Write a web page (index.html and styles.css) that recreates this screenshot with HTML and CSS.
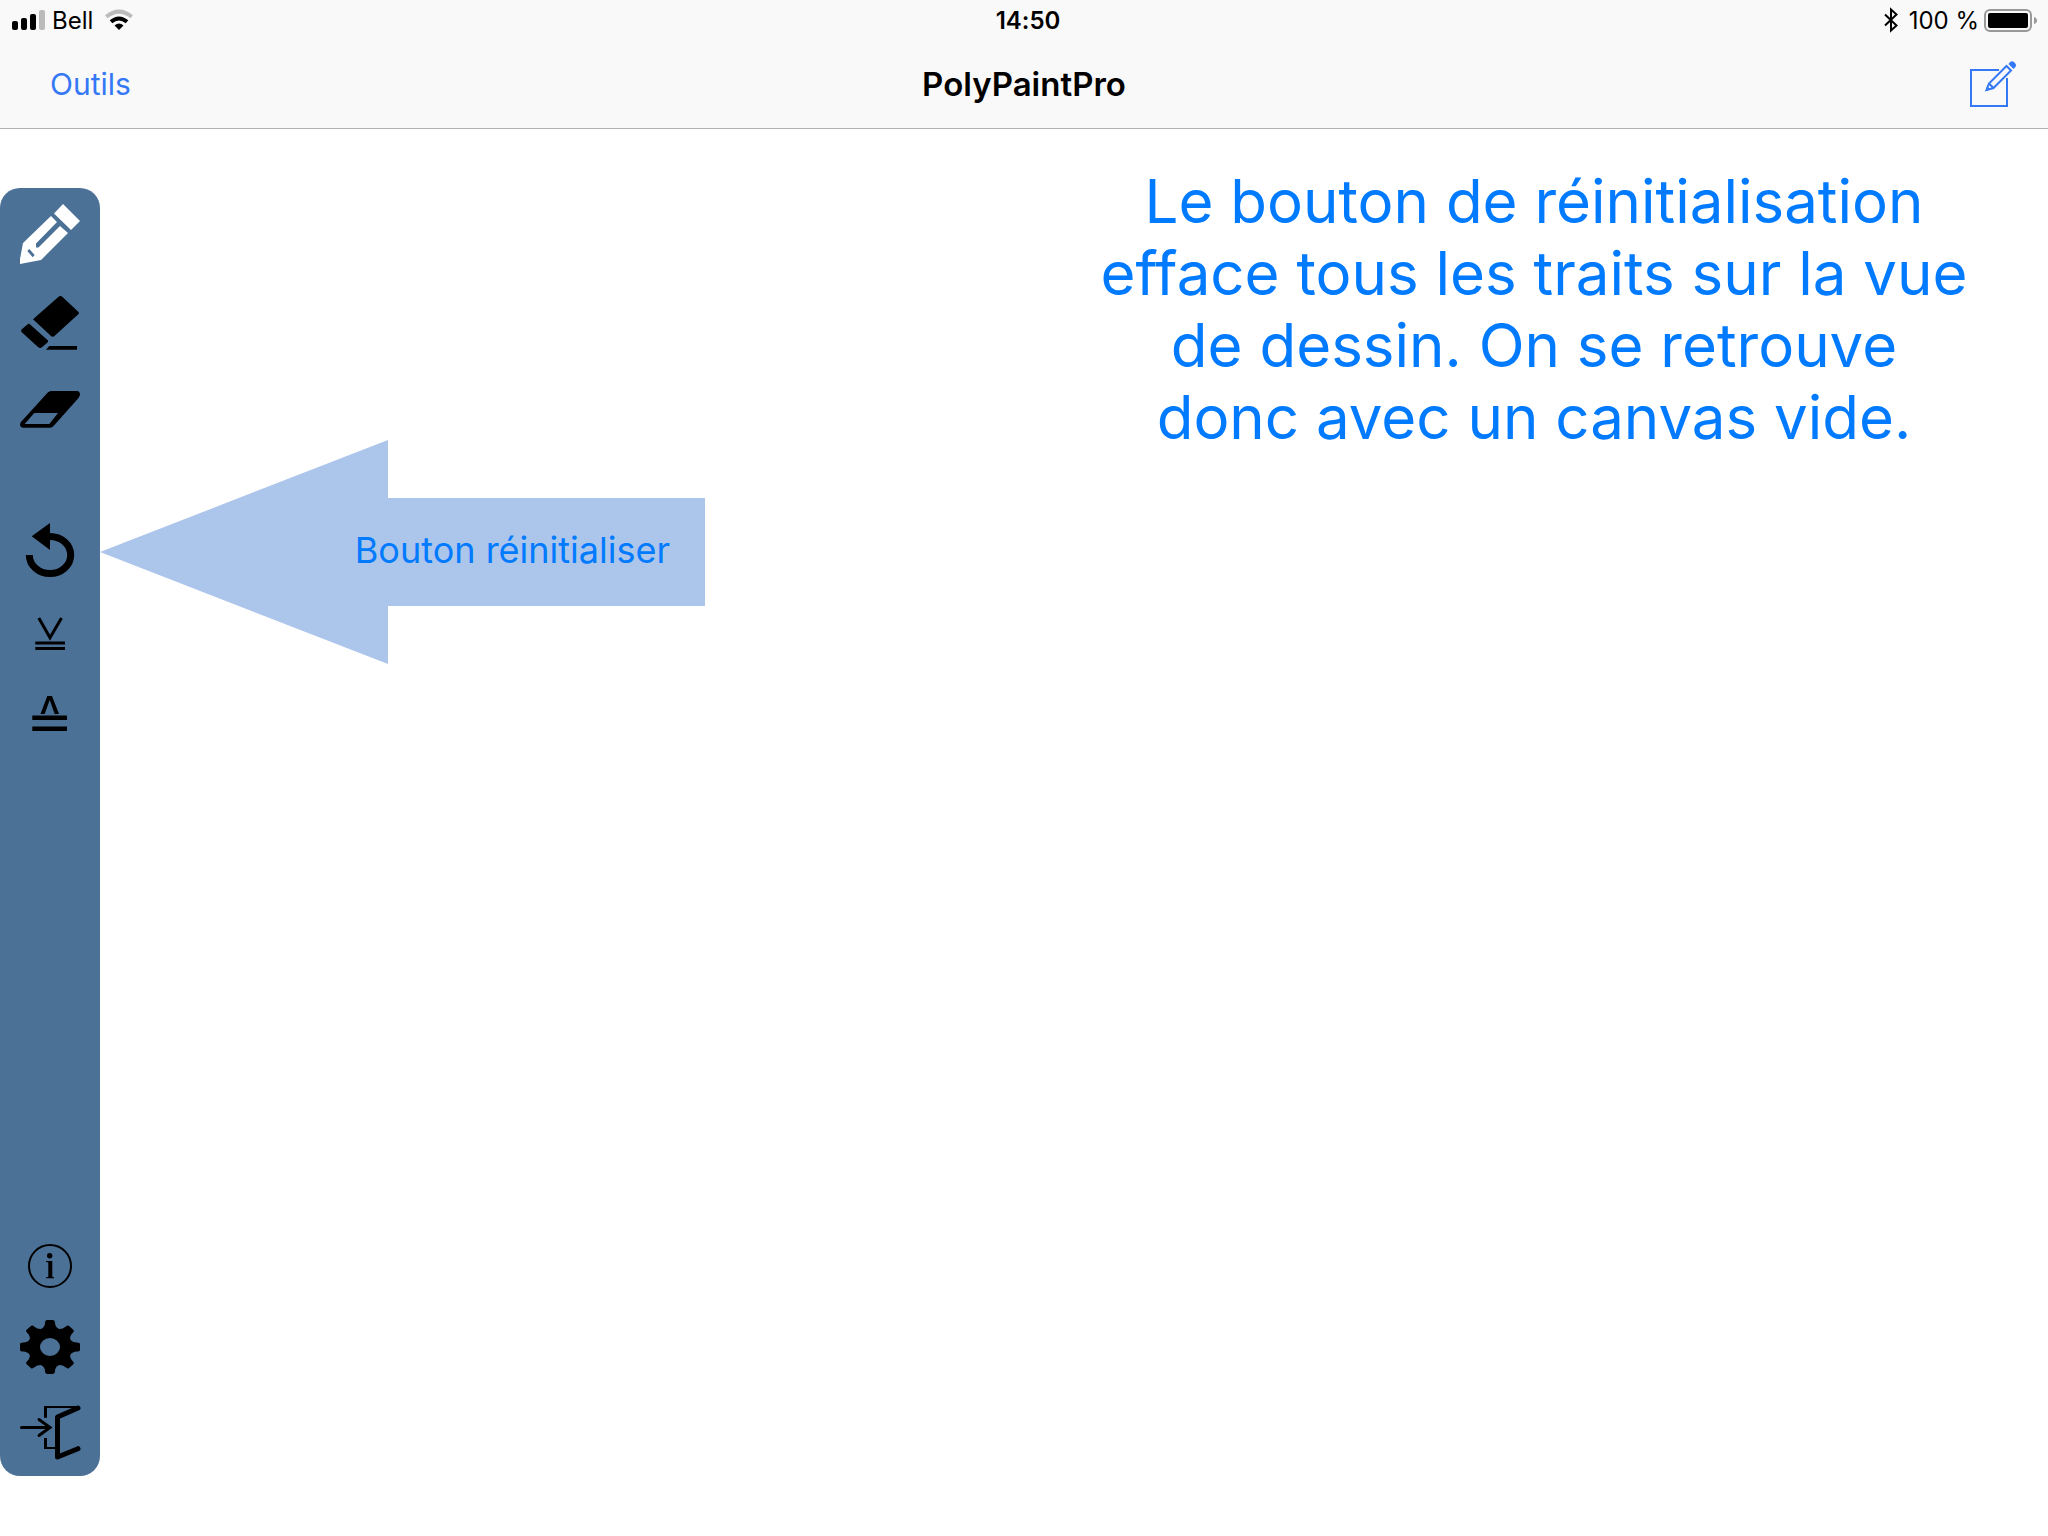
FILE: index.html
```html
<!DOCTYPE html>
<html lang="fr">
<head>
<meta charset="utf-8">
<meta name="viewport" content="width=device-width, initial-scale=1">
<title>PolyPaintPro</title>
<link rel="stylesheet" href="styles.css">
</head>
<body>
<header class="header">
  <div class="status">
    <div class="status-left">
      <svg class="signal" viewBox="0 0 34 20" aria-hidden="true">
        <rect x="0" y="11" width="6" height="9" rx="2"/><rect x="9" y="8" width="6" height="12" rx="2"/><rect x="18" y="4" width="6" height="16" rx="2"/><rect class="dim" x="27" y="0" width="6" height="20" rx="2"/>
      </svg>
      <span class="status-text">Bell</span>
      <svg class="wifi" viewBox="0 0 28 20" aria-hidden="true">
        <path class="dim-line" d="M1.300 6.800Q14 -3.500 26.700 6.800"/>
        <path class="line" d="M6 11.800Q14 5.200 22 11.800"/>
        <path d="M9.500 15.400Q14 11.600 18.500 15.400L14 20Z"/>
      </svg>
    </div>
    <time class="clock status-text">14:50</time>
    <div class="status-right">
      <svg class="bluetooth" viewBox="0 0 14 24" aria-hidden="true"><path d="M1 6.500L12.500 17.500L7 22.500V1.500L12.500 6.500L1 17.500"/></svg>
      <span class="status-text">100 %</span>
      <svg class="battery" viewBox="0 0 53 23" aria-hidden="true"><rect class="shell" x="1" y="1" width="46" height="21" rx="5"/><rect x="4" y="4" width="40" height="15" rx="2"/><path class="nub" d="M50 8Q53 9 53 11.500T50 15Z"/></svg>
    </div>
  </div>
  <nav class="nav">
    <button class="nav-link" type="button">Outils</button>
    <h1 class="title">PolyPaintPro</h1>
    <button class="compose" type="button" aria-label="Nouveau dessin">
      <svg viewBox="0 0 46 46" aria-hidden="true">
        <path d="M29 9H1V45H37V17"/>
        <path d="M16.500 29L19 22.500L36.500 5L41 9.500L23.500 27ZM19 22.500L23.500 27"/>
        <path class="fill" d="M15.500 30L17 25L20.500 28.500ZM38.500 3Q41 -1.500 44.500 1.500T43.500 8Z"/>
      </svg>
    </button>
  </nav>
</header>
<main class="workspace">
  <div class="toolbar" role="toolbar" aria-label="Outils de dessin">
    <div class="group draw">
      <button class="tool active" type="button" aria-label="Crayon"><svg viewBox="0 0 60 60"><path fill-rule="evenodd" d="M43 0L60 17L51 26L34 9.500ZM31 12L37 18L16 39.500V43.500H18.500L40 22L48 29L21 56L0 60V55L3 39ZM7.300 47L9.300 45L14.700 51L12.700 53.300Z"/></svg></button>
      <button class="tool" type="button" aria-label="Efface trait"><svg viewBox="0 0 60 60"><path d="M38 5.300Q40.300 2.700 42.500 5L58.500 20Q59.500 21 58.500 22L35 43.500Q32.700 46 30.500 43.500L13 27.300ZM6.800 33L9 31.500L28 48.500V50L22 55.300Q20 57 18 55L1.500 40Q.5 38.500 1.500 37.500ZM26 57.700L29.300 54H57V57.700Z"/></svg></button>
      <button class="tool" type="button" aria-label="Efface segment"><svg viewBox="0 0 60 60"><path fill-rule="evenodd" d="M30.500 11H57Q60 11 60 15L58.500 18L34 45.500Q32 47.700 30 47.700H3Q-1 47.500 .5 42.500L28 12.300ZM14.300 33L4.700 44H29.300L38 33Z"/></svg></button>
    </div>
    <div class="group actions">
      <button class="tool" type="button" aria-label="Réinitialiser"><svg viewBox="0 0 60 60"><path d="M11.700 16.300L30 3V30Z"/><path class="stroke ring" d="M9.300 35A20.700 18.600 0 1 0 30 16.400"/></svg></button>
      <button class="tool" type="button" aria-label="Empiler"><svg viewBox="0 0 60 60"><path class="stroke thin" d="M18.800 16L30 35.800L41.500 16M15.300 41H45M15.300 46.400H45"/></svg></button>
      <button class="tool" type="button" aria-label="Dépiler"><svg viewBox="0 0 60 60"><path d="M20.500 30L27.300 12H32L39 30H34.700L29.700 16L24.700 30ZM12.300 31.500H47V36H12.300ZM12.300 42.500H47V47H12.300Z"/></svg></button>
    </div>
    <div class="group system">
      <button class="tool" type="button" aria-label="Informations"><svg viewBox="0 0 60 60"><circle class="stroke fine" cx="30" cy="30" r="21"/><circle cx="29.700" cy="19.700" r="2.700"/><path d="M26 25H32.300V40.700L34 41.300V42.300H26V41.300L28.300 40.700V26.500L26 26Z"/></svg></button>
      <button class="tool" type="button" aria-label="Réglages"><svg viewBox="0 0 60 60"><g transform="scale(1 .9)"><circle class="stroke gear" cx="30" cy="30" r="16"/><path d="M20 11Q25 8 25 3Q25 0 27 0H33Q35 0 35 3Q35 8 40 11Z" id="tooth"/><use href="#tooth" transform="rotate(45 30 30)"/><use href="#tooth" transform="rotate(90 30 30)"/><use href="#tooth" transform="rotate(135 30 30)"/><use href="#tooth" transform="rotate(180 30 30)"/><use href="#tooth" transform="rotate(225 30 30)"/><use href="#tooth" transform="rotate(270 30 30)"/><use href="#tooth" transform="rotate(315 30 30)"/></g></svg></button>
      <button class="tool" type="button" aria-label="Quitter"><svg viewBox="0 0 60 60"><path class="stroke arrow" d="M1.500 23.500H29M19 15.500L30 23.500L19 31.500"/><path class="stroke frame" d="M24 3H58M24 44H36"/><path class="stroke thin" d="M25.500 13.700V2M25.500 34V45"/><path class="stroke door" d="M58 4L37.500 13V53L58 44.700"/></svg></button>
    </div>
  </div>
  <p class="callout">Bouton réinitialiser</p>
  <p class="description">Le bouton de réinitialisation efface tous les traits sur la vue de dessin. On se retrouve donc avec un canvas vide.</p>
</main>
</body>
</html>
```

FILE: styles.css
```css
* { box-sizing: border-box; }

body {
  margin: 0;
  min-height: 100vh;
  display: flex;
  flex-direction: column;
  background: #fff;
  color: #000;
  font-family: Inter, "Liberation Sans", sans-serif;
  font-variant-ligatures: none;
  font-feature-settings: "calt" 0;
}

button {
  padding: 0;
  border: 0;
  background: none;
  font: inherit;
  cursor: pointer;
}

svg { display: block; overflow: visible; }

.header {
  background: #f9f9f9;
  border-bottom: 1px solid #b2b2b2;
}

.status, .nav {
  display: grid;
  grid-template-columns: 1fr auto 1fr;
  align-items: center;
}

.status {
  height: 40px;
  padding: 0 11px 0 12px;
  font-size: 24px;
  line-height: 38px;
}

.status-text { padding-top: 2px; }
.status-left, .status-right { display: flex; align-items: center; }
.status-left { gap: 6px; }
.status-right { justify-content: flex-end; gap: 5px; }
.clock { font-weight: 600; padding-left: 7px; }

.signal { width: 34px; height: 20px; }
.wifi { width: 28px; height: 20px; margin-left: 6px; }
.bluetooth { width: 14px; height: 24px; margin-right: 6px; fill: none; stroke: #000; stroke-width: 2; }
.battery { width: 53px; height: 23px; }
.dim { fill: #bbb; }
.dim-line, .line { fill: none; stroke-width: 4; }
.dim-line { stroke: #bbb; }
.line { stroke: #000; }
.shell { fill: none; stroke: #999; stroke-width: 2; }
.nub { fill: #999; }

.nav {
  height: 88px;
  padding: 0 32px 0 50px;
}

.nav-link {
  justify-self: start;
  color: #3478f6;
  font-size: 30px;
  line-height: 40px;
}

.title {
  margin: 0;
  padding-right: 18px;
  font-size: 33px;
  line-height: 40px;
  font-weight: 600;
}

.compose { justify-self: end; }
.compose svg { width: 46px; height: 46px; fill: none; stroke: #3478f6; stroke-width: 2; }
.compose .fill { fill: #3478f6; stroke: none; }

.workspace {
  flex: 1;
  display: flex;
  align-items: flex-start;
}

.toolbar {
  align-self: stretch;
  flex: none;
  display: flex;
  flex-direction: column;
  width: 100px;
  margin: 59px 0 60px;
  padding: 16px 0 12px;
  border-radius: 20px;
  background: #4c7197;
}

.group { display: flex; flex-direction: column; align-items: center; }
.draw { gap: 28px; }
.actions { gap: 22px; margin-top: 80px; }
.system { gap: 24px; margin-top: auto; }

.tool, .tool svg { width: 60px; height: 60px; }
.tool { color: #000; }
.tool.active { color: #fff; }
.tool svg { fill: currentColor; }
.tool .stroke { fill: none; stroke: currentColor; }
.tool .ring { stroke-width: 7; }
.tool .thin { stroke-width: 3; }
.tool .frame { stroke-width: 2; }
.tool .fine { stroke-width: 2; }
.tool .gear { stroke-width: 12; }
.tool .arrow { stroke-width: 3; stroke-linecap: round; }
.tool .door { stroke-width: 5; stroke-linecap: round; stroke-linejoin: round; }

.callout {
  flex: none;
  width: 605px;
  margin: 311px 0 0;
  padding: 0 35px 4px;
  background: #acc5eb;
  clip-path: polygon(0 50%, 288px 0, 288px 58px, 100% 58px, 100% 166px, 288px 166px, 288px 100%);
  color: #007aff;
  font-size: 36px;
  line-height: 220px;
  text-align: right;
}

.description {
  width: 880px;
  margin: 36px 74px 0 auto;
  color: #007aff;
  font-size: 60px;
  line-height: 72px;
  text-align: center;
}
```
